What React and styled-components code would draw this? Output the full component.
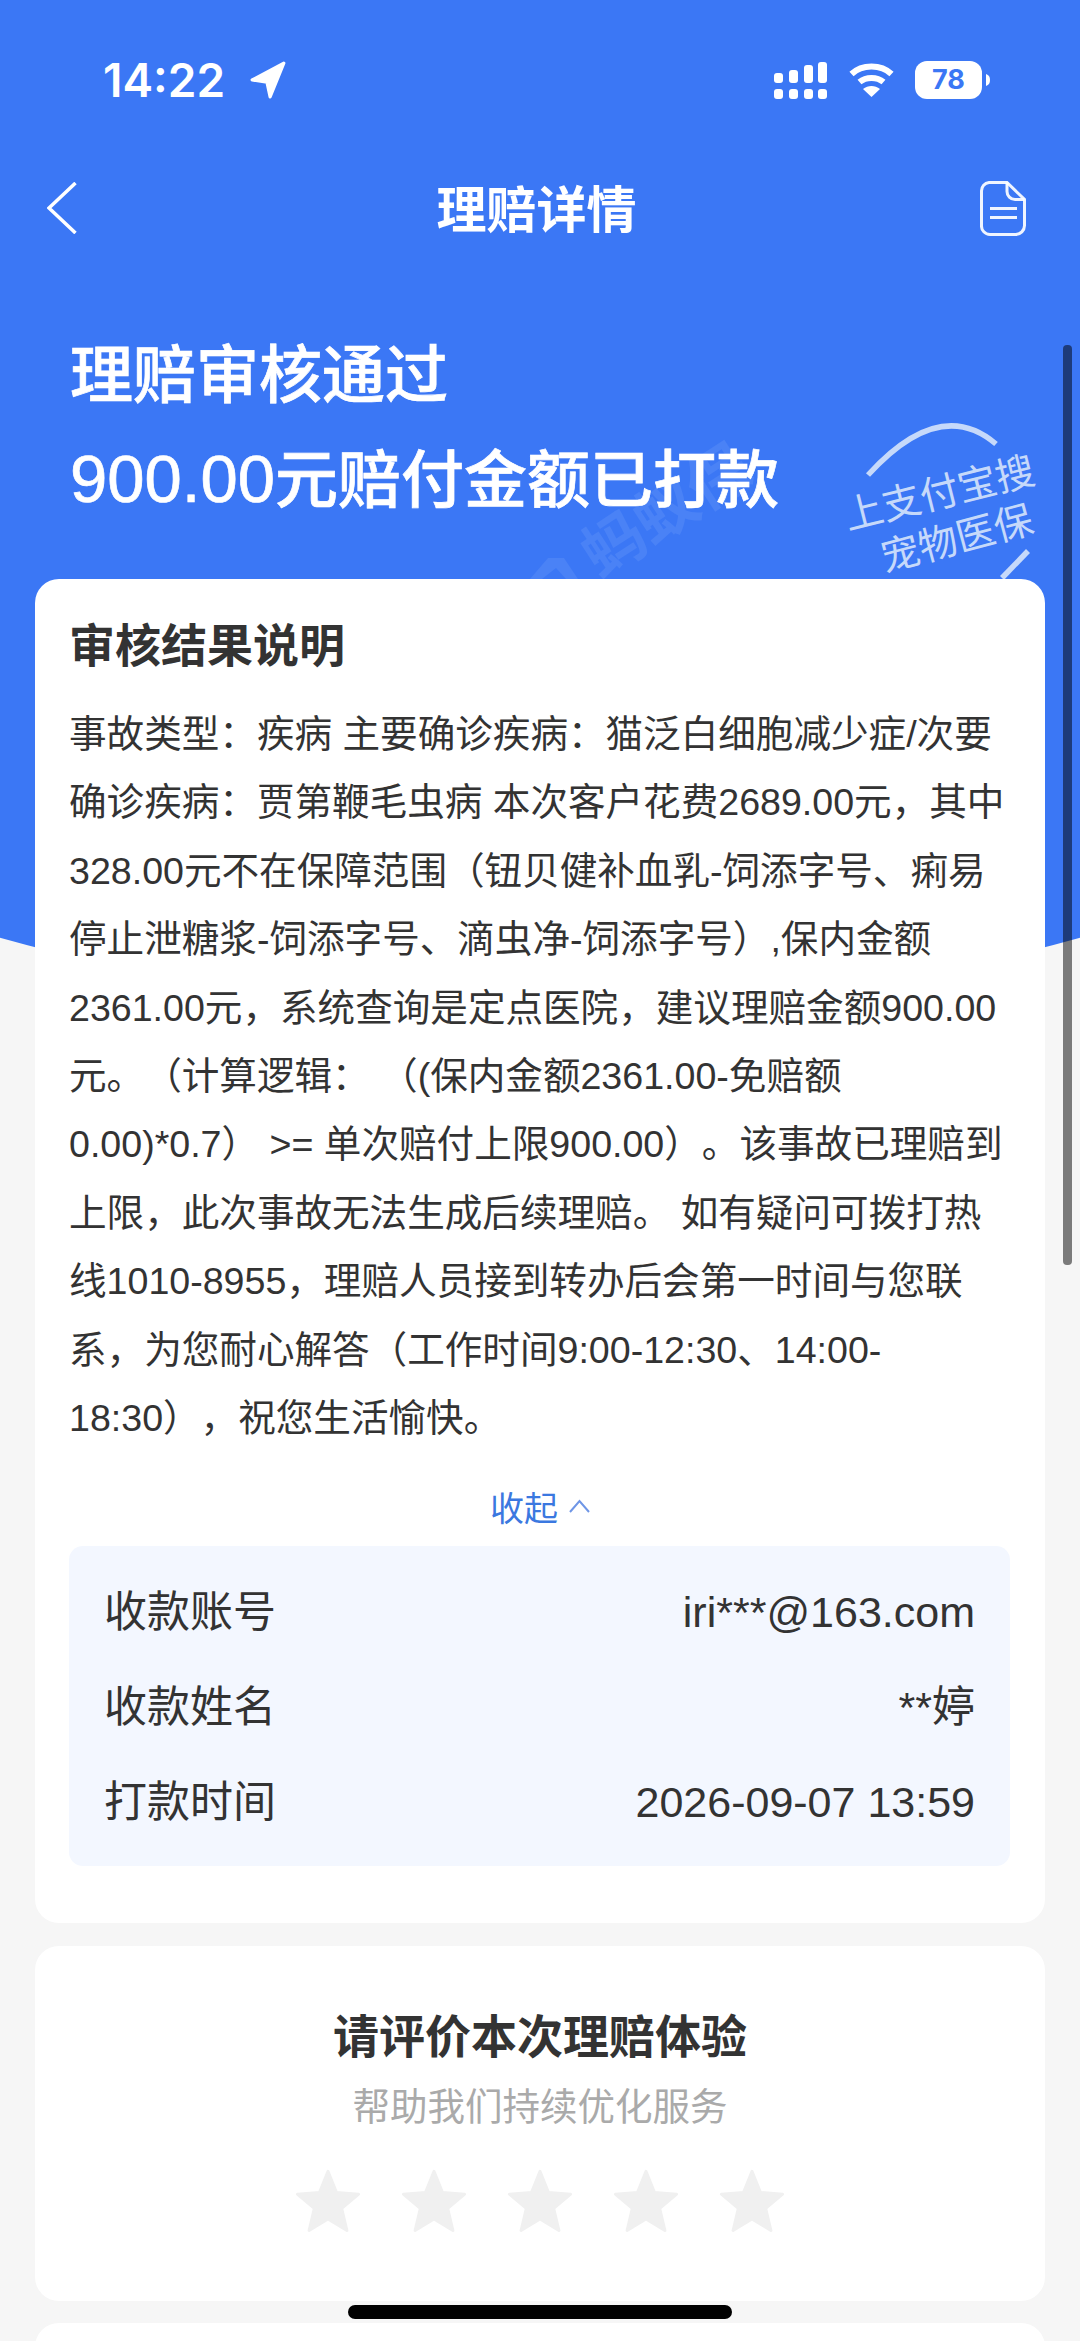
import React from 'react'
import styled, { createGlobalStyle } from 'styled-components'

const GlobalStyle = createGlobalStyle`
  html, body {
    margin: 0;
    padding: 0;
    background: #f6f6f6;
    overflow: hidden;
  }
  * { box-sizing: border-box; }
`

const Page = styled.div`
  position: relative;
  width: 1080px;
  height: 2341px;
  overflow: hidden;
  background: #f6f6f6;
  font-family: "Liberation Sans", "Noto Sans CJK SC", sans-serif;
  text-spacing-trim: space-all;
`

// big circle, only its shallow bottom edge shows beside the card
const Banner = styled.div`
  position: absolute;
  left: -1460px;
  top: -2988px;
  width: 4000px;
  height: 4000px;
  border-radius: 50%;
  background: #3b77f5;
`

const Content = styled.div`
  position: relative;
  display: flex;
  flex-direction: column;
`

const StatusBar = styled.div`
  display: flex;
  justify-content: space-between;
  align-items: center;
  height: 62px;
  margin-top: 49px;
  padding: 0 90px 0 103px;
  color: #fff;
`

const Clock = styled.div`
  display: flex;
  align-items: center;
  gap: 24px;
  font-size: 46px;
  font-weight: 600;
  font-family: Inter, sans-serif;
`

const StatusIcons = styled.div`
  display: flex;
  align-items: center;
  gap: 21px;
`

const Battery = styled.div`
  display: flex;
  align-items: center;
  gap: 4px;
`

const BatteryBody = styled.div`
  width: 67px;
  height: 38px;
  border-radius: 12px;
  background: #fff;
  color: #3b77f5;
  font-family: Inter, sans-serif;
  font-size: 27px;
  font-weight: 700;
  line-height: 38px;
  text-align: center;
`

const NavBar = styled.div`
  display: flex;
  align-items: center;
  height: 80px;
  margin-top: 57px;
  padding: 0 47px;
`

const NavSide = styled.div`
  flex: 1;
  display: flex;
  justify-content: ${p => p.$end ? 'flex-end' : 'flex-start'};
  padding-right: ${p => p.$end ? '7px' : '0'};
`

const NavTitle = styled.div`
  padding-bottom: 5px;
  color: #fff;
  font-size: 50px;
  font-weight: 700;
`

const Heading = styled.div`
  margin-top: 75px;
  padding-left: 70px;
  color: #fff;
  font-size: 63px;
  font-weight: 500;
  line-height: 105px;
  -webkit-text-stroke: 0.7px #fff;
`

const Amount = styled.span`
  font-size: 67px;
  line-height: 1;
`

const Stamp = styled.svg`
  position: absolute;
  left: 840px;
  top: 420px;
  overflow: visible;
`

const Watermark = styled.svg`
  position: absolute;
  left: 520px;
  top: 420px;
  overflow: visible;
`

const Card = styled.div`
  position: relative;
  margin: ${p => p.$gap}px 35px 0;
  padding: ${p => p.$pad};
  border-radius: 24px;
  background: #fff;
  color: #333;
`

const CardTitle = styled.div`
  font-size: 46px;
  font-weight: 700;
  line-height: 64px;
  padding-left: 34px;
`

const Body = styled.div`
  margin-top: 22px;
  padding-left: 34px;
  font-size: 37.6px;
  line-height: 68.4px;
  color: #333;
`

const BodyLine = styled.div`
  white-space: pre;
`

const Toggle = styled.div`
  display: flex;
  justify-content: center;
  align-items: center;
  gap: 11px;
  margin-top: 26px;
  height: 56px;
  color: #3b78e0;
  font-size: 34px;
`

const AccountBox = styled.div`
  margin: 12px 35px 0 34px;
  padding: 38px 35px 36px;
  border-radius: 14px;
  background: #f3f7ff;
  height: 320px;
  display: flex;
  flex-direction: column;
  justify-content: space-between;
`

const Row = styled.div`
  display: flex;
  justify-content: space-between;
  align-items: center;
  font-size: 43px;
  line-height: 56px;
  color: #333;
`

const RatingTitle = styled.div`
  text-align: center;
  font-size: 46px;
  font-weight: 700;
  line-height: 62px;
  color: #333;
`

const RatingHint = styled.div`
  margin-top: 14px;
  text-align: center;
  font-size: 37.5px;
  line-height: 50px;
  color: #aaa;
`

const Stars = styled.div`
  display: flex;
  justify-content: center;
  gap: 36px;
  margin-top: 35px;
`

const Scrollbar = styled.div`
  position: absolute;
  left: 1063px;
  top: 345px;
  width: 9px;
  height: 920px;
  border-radius: 4px;
  background: rgba(0, 0, 0, 0.5);
`

const HomeBar = styled.div`
  position: absolute;
  left: 348px;
  top: 2305px;
  width: 384px;
  height: 14px;
  border-radius: 7px;
  background: #000;
`

const bodyLines = [
  '事故类型：疾病 主要确诊疾病：猫泛白细胞减少症/次要',
  '确诊疾病：贾第鞭毛虫病 本次客户花费2689.00元，其中',
  '328.00元不在保障范围（钮贝健补血乳-饲添字号、痢易',
  '停止泄糖浆-饲添字号、滴虫净-饲添字号）,保内金额',
  '2361.00元，系统查询是定点医院，建议理赔金额900.00',
  '元。（计算逻辑： （(保内金额2361.00-免赔额',
  '0.00)*0.7） >= 单次赔付上限900.00）。该事故已理赔到',
  '上限，此次事故无法生成后续理赔。 如有疑问可拨打热',
  '线1010-8955，理赔人员接到转办后会第一时间与您联',
  '系，为您耐心解答（工作时间9:00-12:30、14:00-',
  '18:30），祝您生活愉快。',
]

const Star = () => (
  <svg width="70" height="70" viewBox="0 0 24 24">
    <path
      d="M12 1.5l2.9 7.2 7.6.6-5.8 4.9 1.8 7.6-6.5-4-6.500 4 1.8-7.6-5.8-4.900 7.6-.6z"
      fill="#f0f0f0"
      stroke="#f0f0f0"
      strokeWidth="1"
      strokeLinejoin="round"
    />
  </svg>
)

export default function App() {
  return (
    <Page>
      <GlobalStyle />
      <Banner />
      <Watermark width="320" height="170" viewBox="0 0 320 170" fill="#4a82f6">
        <path d="M10 159L28 138h16l14 21H46L36 148 22 159z" />
        <text fontSize="62" fontWeight="700" fontFamily="Noto Sans CJK SC" transform="translate(80 160) rotate(-33)">蚂蚁保</text>
      </Watermark>
      <Stamp width="210" height="180" viewBox="0 0 210 180" fill="none">
        <path d="M28 55Q100 -24 156 24" stroke="#c6d9fa" strokeWidth="5.500" />
        <path d="M162 158L188 131" stroke="#c6d9fa" strokeWidth="5.500" />
        <g fill="#c6d9fa" fontFamily="Noto Sans CJK SC">
          <text fontSize="39" transform="translate(8 110) rotate(-14)">上支付宝搜</text>
          <text fontSize="39" transform="translate(45 152) rotate(-15)">宠物医保</text>
        </g>
      </Stamp>
      <Content>
        <StatusBar>
          <Clock>
            14:22
            <svg width="38" height="38" viewBox="0 0 36 36">
              <path d="M33 2L3 18l14 2 3 14z" fill="#fff" stroke="#fff" strokeWidth="3" strokeLinejoin="round" />
            </svg>
          </Clock>
          <StatusIcons>
            <svg width="54" height="37" viewBox="0 0 54 37" fill="#fff">
              <rect x="0" y="11" width="9" height="10" rx="3" />
              <rect x="15" y="8" width="9" height="13" rx="3" />
              <rect x="30" y="3" width="9" height="18" rx="3" />
              <rect x="44" y="0" width="9" height="21" rx="3" />
              <rect x="0" y="27" width="9" height="10" rx="3" />
              <rect x="15" y="27" width="9" height="10" rx="3" />
              <rect x="30" y="27" width="9" height="10" rx="3" />
              <rect x="44" y="27" width="9" height="10" rx="3" />
            </svg>
            <svg width="45" height="34" viewBox="0 0 45 34" fill="none" stroke="#fff" strokeWidth="6">
              <path d="M2.5 11C13 1 32 1 42.5 11" />
              <path d="M10.5 19C17 13.5 28 13.5 34.5 19" />
              <path d="M14 26c5-4 12-4 17 0l-8.500 8z" fill="#fff" stroke="none" />
            </svg>
            <Battery>
              <BatteryBody>78</BatteryBody>
              <svg width="4" height="12" viewBox="0 0 4 12"><path d="M0 0c3 1 4 3 4 6s-1 5-4 6z" fill="#fff" /></svg>
            </Battery>
          </StatusIcons>
        </StatusBar>
        <NavBar>
          <NavSide>
            <svg width="30" height="52" viewBox="0 0 30 52" fill="none" stroke="#fff" strokeWidth="3.5">
              <path d="M28.500 1L2 26l26.500 25" />
            </svg>
          </NavSide>
          <NavTitle>理赔详情</NavTitle>
          <NavSide $end>
            <svg width="46" height="55" viewBox="0 0 46 55" fill="none" stroke="#fff" strokeOpacity="0.92" strokeWidth="3">
              <path d="M9 1.500h18l17.500 17v26a9 9 0 0 1-9 9H10a8.500 8.500 0 0 1-8.500-9V10A8.500 8.500 0 0 1 9 1.500z" />
              <path d="M27 1.500v9a8 8 0 0 0 8 8h9.500M10 27.500h27M10 36.500h27" />
            </svg>
          </NavSide>
        </NavBar>
        <Heading>
          <div>理赔审核通过</div>
          <div><Amount>900.00</Amount>元赔付金额已打款</div>
        </Heading>
        <Card $gap={46} $pad="35px 0 57px">
          <CardTitle>审核结果说明</CardTitle>
          <Body>
            {bodyLines.map(line => <BodyLine key={line}>{line}</BodyLine>)}
          </Body>
          <Toggle>
            收起
            <svg width="21" height="14" viewBox="0 0 21 14" fill="none" stroke="#6f96e6" strokeWidth="2">
              <path d="M1 13L10.500 2 20 13" />
            </svg>
          </Toggle>
          <AccountBox>
            <Row><span>收款账号</span><span>iri***@163.com</span></Row>
            <Row><span>收款姓名</span><span>**婷</span></Row>
            <Row><span>打款时间</span><span>2026-09-07 13:59</span></Row>
          </AccountBox>
        </Card>
        <Card $gap={23} $pad="60px 0 64px">
          <RatingTitle>请评价本次理赔体验</RatingTitle>
          <RatingHint>帮助我们持续优化服务</RatingHint>
          <Stars><Star /><Star /><Star /><Star /><Star /></Stars>
        </Card>
        <Card $gap={22} $pad="60px 0 0" />
      </Content>
      <Scrollbar />
      <HomeBar />
    </Page>
  )
}
